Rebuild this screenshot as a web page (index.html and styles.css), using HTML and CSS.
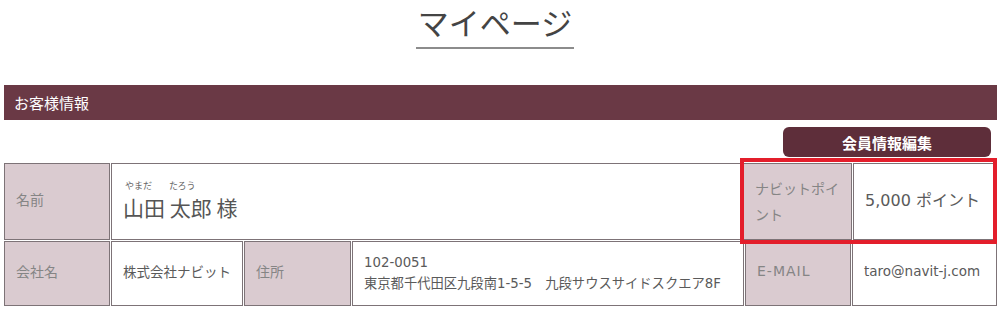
FILE: index.html
```html
<!DOCTYPE html>
<html lang="ja">
<head>
    <meta charset="UTF-8">
    <title>マイページ</title>
    <link rel="stylesheet" href="styles.css">
</head>
<body>
    <div class="page-title">
        <h1>マイページ</h1>
    </div>

    <div class="section">
        <div class="section-head">お客様情報</div>
        <div class="edit-row">
            <button class="edit-btn">会員情報編集</button>
        </div>

        <div class="info">
            <div class="info-row row-name">
                <div class="cell label w-label">名前</div>
                <div class="cell value w-name">
                    <div class="kana"><span>やまだ</span><span>たろう</span></div>
                    <div class="fullname">山田 太郎 様</div>
                </div>
                <div class="cell label w-point-label">ナビットポイント</div>
                <div class="cell value w-point">5,000 ポイント</div>
            </div>
            <div class="info-row row-company">
                <div class="cell label w-label">会社名</div>
                <div class="cell value w-company">株式会社ナビット</div>
                <div class="cell label w-addr-label">住所</div>
                <div class="cell value w-addr">
                    102-0051<br>東京都千代田区九段南1-5-5　九段サウスサイドスクエア8F
                </div>
                <div class="cell label w-mail-label">E-MAIL</div>
                <div class="cell value w-mail">taro@navit-j.com</div>
            </div>
            <div class="highlight"></div>
        </div>
    </div>
</body>
</html>
```

FILE: styles.css
```css
body {
    margin: 0;
    font-family: "DejaVu Sans", "Noto Sans CJK JP", sans-serif;
    color: #5a5a5a;
    background: #fff;
}
.page-title {
    display: flex;
    justify-content: center;
    padding: 2px 10px 0 0;
}
.page-title h1 {
    margin: 0;
    font-family: "Noto Sans CJK JP", sans-serif;
    font-weight: 400;
    font-size: 31px;
    line-height: 40px;
    color: #444;
    padding: 0 2px 5px;
    border-bottom: 2px solid #8c8c8c;
}
.section {
    margin: 36px 3px 0 4px;
}
.section-head {
    height: 35px;
    line-height: 35px;
    padding-left: 10px;
    background-color: #6a3945;
    color: #fff;
    font-family: "Noto Sans CJK JP", sans-serif;
    font-size: 15px;
}
.edit-row {
    display: flex;
    justify-content: flex-end;
    padding: 7px 6px 6px 0;
}
.edit-btn {
    width: 208px;
    height: 30px;
    border: none;
    border-radius: 6px;
    background-color: #5e2e3a;
    color: #fff;
    font-family: "Noto Sans CJK JP", sans-serif;
    font-weight: 700;
    font-size: 15px;
    padding: 0;
}
.info {
    position: relative;
}
.info-row {
    display: flex;
    gap: 1px;
    margin-bottom: 1px;
}
.cell {
    box-sizing: border-box;
    border: 1px solid #7d7377;
    display: flex;
    flex-direction: column;
    justify-content: center;
    padding: 0 11px 5px;
    font-size: 13px;
    white-space: nowrap;
}
.label {
    background-color: #dacbd0;
    color: #858585;
    font-family: "Noto Sans CJK JP", sans-serif;
    font-size: 14px;
}
.value {
    background: #fff;
}
.row-name { height: 77px; }
.row-company { height: 65px; }
.w-label { width: 106px; }
.w-name { flex: 1; padding-bottom: 2px; }
.w-point-label { width: 109px; line-height: 26px; white-space: normal; padding-bottom: 2px; }
.w-point { width: 144px; font-size: 16px; }
.w-company { width: 132px; font-family: "Noto Sans CJK JP", sans-serif; font-size: 13.5px; }
.w-addr-label { width: 107px; }
.w-addr { flex: 1; font-size: 13.3px; line-height: 21px; padding-bottom: 1px; }
.w-mail-label { width: 106px; font-family: "DejaVu Sans", sans-serif; font-size: 14px; letter-spacing: 1px; }
.w-mail { width: 145px; font-size: 13.5px; }
.kana {
    display: flex;
    gap: 17px;
    font-size: 9px;
    padding-left: 2px;
    color: #666;
}
.fullname {
    font-family: "Noto Sans CJK JP", sans-serif;
    font-size: 21px;
    line-height: 30px;
    color: #555;
}
.highlight {
    position: absolute;
    left: 736px;
    top: -5px;
    width: 257px;
    height: 86px;
    box-sizing: border-box;
    border: 4px solid #e31e2b;
}
```
